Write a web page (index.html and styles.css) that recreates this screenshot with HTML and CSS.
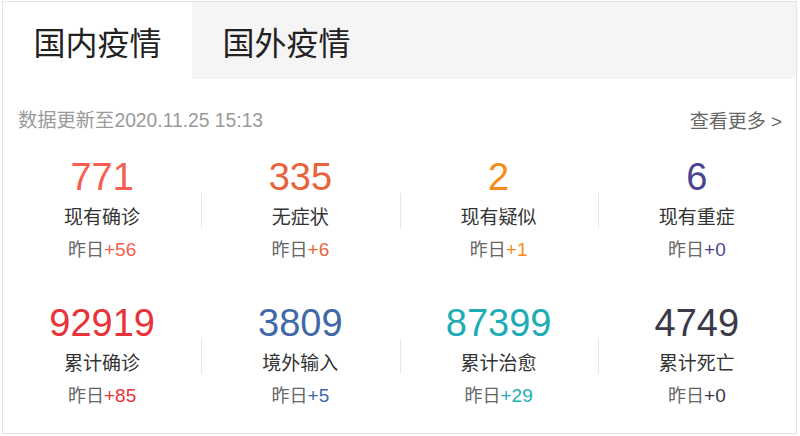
FILE: index.html
```html
<!DOCTYPE html>
<html>
<head>
  <meta charset="utf-8">
  <title>疫情数据</title>
  <link rel="stylesheet" href="styles.css">
</head>
<body>
  <div class="panel">
    <div class="tabs">
      <div class="tab active">国内疫情</div>
      <div class="tab">国外疫情</div>
    </div>

    <div class="meta">
      <span class="time">数据更新至2020.11.25 15:13</span>
      <a class="more" href="#">查看更多 &gt;</a>
    </div>

    <div class="stats">
      <div class="stat">
        <div class="num c-now">771</div>
        <div class="label">现有确诊</div>
        <div class="diff">昨日<span class="c-now">+56</span></div>
      </div>
      <div class="stat">
        <div class="num c-asym">335</div>
        <div class="label">无症状</div>
        <div class="diff">昨日<span class="c-asym">+6</span></div>
      </div>
      <div class="stat">
        <div class="num c-susp">2</div>
        <div class="label">现有疑似</div>
        <div class="diff">昨日<span class="c-susp">+1</span></div>
      </div>
      <div class="stat">
        <div class="num c-heavy">6</div>
        <div class="label">现有重症</div>
        <div class="diff">昨日<span class="c-heavy">+0</span></div>
      </div>

      <div class="stat">
        <div class="num c-total">92919</div>
        <div class="label">累计确诊</div>
        <div class="diff">昨日<span class="c-total">+85</span></div>
      </div>
      <div class="stat">
        <div class="num c-import">3809</div>
        <div class="label">境外输入</div>
        <div class="diff">昨日<span class="c-import">+5</span></div>
      </div>
      <div class="stat">
        <div class="num c-cured">87399</div>
        <div class="label">累计治愈</div>
        <div class="diff">昨日<span class="c-cured">+29</span></div>
      </div>
      <div class="stat">
        <div class="num c-dead">4749</div>
        <div class="label">累计死亡</div>
        <div class="diff">昨日<span class="c-dead">+0</span></div>
      </div>
    </div>
  </div>
</body>
</html>
```

FILE: styles.css
```css
body {
  margin: 0;
  padding: 1px 2px;
  background-color: #fff;
  font-family: "Liberation Sans", "Noto Sans CJK SC", sans-serif;
  color: #333;
}

.panel {
  width: 795px;
  height: 433px;
  box-sizing: border-box;
  border: 1px solid #e4e4e4;
}

/* tabs */
.tabs {
  display: flex;
  height: 77px;
  background-color: #f5f5f5;
}

.tab {
  width: 189px;
  display: flex;
  align-items: center;
  justify-content: center;
  font-size: 32px;
  color: #222;
}

.tab.active {
  background-color: #fff;
}

/* update line */
.meta {
  display: flex;
  justify-content: space-between;
  align-items: center;
  height: 24px;
  margin-top: 28px;
  padding: 0 14px 0 15px;
  font-size: 19px;
}

.time {
  color: #9a9a9a;
  font-size: 19.3px;
}

.more {
  color: #666;
  text-decoration: none;
}

/* numbers */
.stats {
  display: grid;
  grid-template-columns: repeat(4, 1fr);
  row-gap: 38px;
  margin-top: 24px;
}

.stat {
  position: relative;
  text-align: center;
}

.stat:not(:nth-child(4n+1))::before {
  content: "";
  position: absolute;
  left: 0;
  top: 38px;
  width: 1px;
  height: 35px;
  background-color: #e6e6e6;
}

.num {
  font-size: 38px;
  line-height: 44px;
}

.label {
  margin-top: 5px;
  font-size: 19px;
  line-height: 28px;
  color: #333;
}

.diff {
  margin-top: 5px;
  font-size: 18px;
  line-height: 26px;
  color: #666;
}

.diff span {
  font-size: 19px;
}

.c-now { color: #f75d51; }
.c-asym { color: #e9643c; }
.c-susp { color: #f58d1a; }
.c-heavy { color: #4b4591; }
.c-total { color: #e8333b; }
.c-import { color: #4169a8; }
.c-cured { color: #1fadb5; }
.c-dead { color: #3a3a48; }
```
